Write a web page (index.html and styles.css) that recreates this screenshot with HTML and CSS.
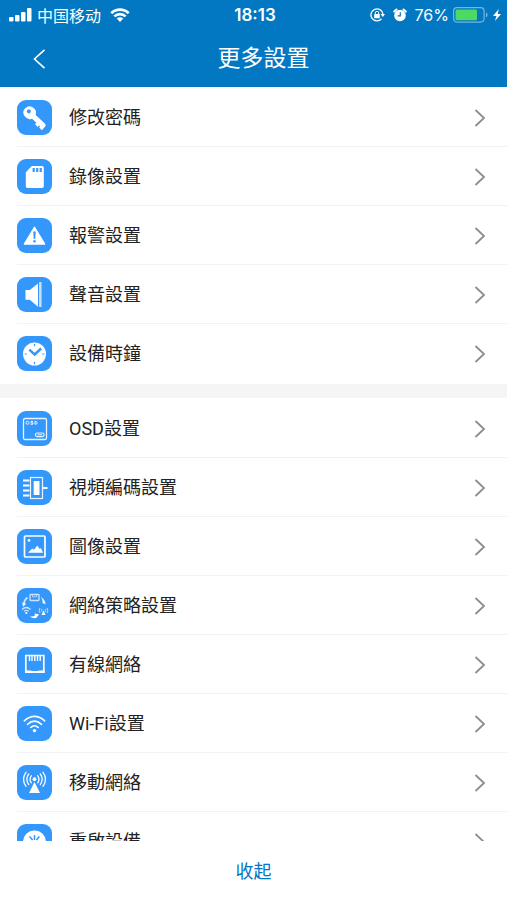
FILE: index.html
```html
<!DOCTYPE html>
<html lang="zh-Hant">
<head>
<meta charset="utf-8">
<meta name="viewport" content="width=device-width, initial-scale=1">
<title>更多設置</title>
<link rel="stylesheet" href="styles.css">
</head>
<body>
<svg class="sprite" aria-hidden="true">
  <symbol id="chevron" viewBox="0 0 12 18"><path d="M1.5 1 10 9 1.5 17" fill="none" stroke="currentColor" stroke-width="1.8"/></symbol>
</svg>
<header class="header">
  <div class="status">
    <div class="status-left">
      <svg width="23" height="14" viewBox="0 0 23 14" fill="#fff"><rect x="0" y="9" width="4.500" height="4.500" rx="1"/><rect x="6" y="7" width="4.500" height="6.500" rx="1"/><rect x="12" y="4" width="4.500" height="9.500" rx="1"/><rect x="18" y="0" width="4.500" height="13.500" rx="1"/></svg>
      <span class="carrier" lang="zh-Hans">中国移动</span>
      <svg class="wifi" width="20" height="14" viewBox="0 0 20 14"><g fill="none" stroke="#fff" stroke-width="2.700"><path d="M1.300 5.200a12.300 12.300 0 0 1 17.400 0"/><path d="M4.400 8.400a8 8 0 0 1 11.200 0"/></g><path d="M6.700 10.600a4.700 4.700 0 0 1 6.600 0L10 14z" fill="#fff"/></svg>
    </div>
    <time class="time">18:13</time>
    <div class="status-right">
      <svg width="15" height="14" viewBox="0 0 15 14"><path d="M11.500 10.800A6 6 0 1 1 12.900 6" fill="none" stroke="#fff" stroke-width="1.300"/><path d="M10.500 6H15l-2.200 3z" fill="#fff"/><rect x="4.200" y="6" width="5.600" height="4.300" rx=".6" fill="#fff"/><path d="M5.300 6V5a1.700 1.700 0 0 1 3.400 0v1" fill="none" stroke="#fff"/></svg>
      <svg class="alarm" width="14" height="14" viewBox="0 0 14 14"><circle cx="7" cy="7.500" r="5.800" fill="#fff"/><path d="M1.200 3.600 3.500 1.500M12.800 3.600l-2.300-2.100" stroke="#fff" stroke-width="2" stroke-linecap="round"/><path d="M7.300 4.200v3.600H4.600" fill="none" stroke="#0277c2" stroke-width="1.200"/></svg>
      <span class="percent">76%</span>
      <svg width="36" height="16" viewBox="0 0 36 16"><rect x=".6" y=".6" width="30.500" height="14.500" rx="3.500" fill="none" stroke="#76b6df" stroke-width="1.200"/><rect x="2.500" y="2.500" width="21.500" height="10.800" rx="1.500" fill="#4cd964"/><path d="M33 5.500c2 .5 2 4.300 0 4.800z" fill="#76b6df"/></svg>
      <svg class="bolt" width="8" height="12" viewBox="0 0 8 12"><path d="M5.800 0 0 7h3.400L2 12l6-7H4.700z" fill="#fff"/></svg>
    </div>
  </div>
  <div class="nav">
    <button class="back" type="button" aria-label="返回"><svg width="13" height="20" viewBox="0 0 13 20"><path d="M11.500.8 1.500 10l10 9.200" fill="none" stroke="#fff" stroke-width="1.600"/></svg></button>
    <h1 class="title">更多設置</h1>
  </div>
</header>
<main class="content">
  <ul class="group">
    <li><a class="row" href="#password"><svg class="icon" viewBox="0 0 35 35"><g transform="translate(13 12.800) rotate(43)"><path fill-rule="evenodd" d="M-6.500 0A6.300 6 0 0 1 5.600-2.300H18.500Q20.500-2 20.500 0V4.600H16.800V3.200H15.300V5H11.500V2.900H5.500A6.300 6 0 0 1-6.500 0zM-3.900-.3a2 2 0 1 0 4 0 2 2 0 1 0-4 0z" fill="#fff"/></g></svg><span class="label">修改密碼</span><svg class="arrow"><use href="#chevron"/></svg></a></li>
    <li><a class="row" href="#record"><svg class="icon" viewBox="0 0 35 35"><path d="M14.800 7H25a1.800 1.800 0 0 1 1.800 1.800v18.400A1.800 1.800 0 0 1 25 29H10.600a1.800 1.800 0 0 1-1.800-1.800V13.300z" fill="#fff"/><path d="M16.700 9v4M20.200 9v4M23.700 9v4" stroke="#3397fb" stroke-width="2.200"/></svg><span class="label">錄像設置</span><svg class="arrow"><use href="#chevron"/></svg></a></li>
    <li><a class="row" href="#alarm"><svg class="icon" viewBox="0 0 35 35"><path d="M17.500 8.800 28 26.200H7z" fill="#fff" stroke="#fff" stroke-linejoin="round"/><path d="M16.200 13.500h2.600l-.6 7.500h-1.400z" fill="#3397fb"/><circle cx="17.500" cy="23.300" r="1.200" fill="#3397fb"/></svg><span class="label">報警設置</span><svg class="arrow"><use href="#chevron"/></svg></a></li>
    <li><a class="row" href="#sound"><svg class="icon" viewBox="0 0 35 35"><path d="M8.500 13h4.300L21 6.500v23.200l-8.200-6.900H8.500z" fill="#fff"/><path d="M23.300 5v25" stroke="#c8e1ff" stroke-width="2.500"/></svg><span class="label">聲音設置</span><svg class="arrow"><use href="#chevron"/></svg></a></li>
    <li><a class="row" href="#clock"><svg class="icon" viewBox="0 0 35 35"><circle cx="17.500" cy="18" r="11.500" fill="#fff"/><path d="M17.500 8v2.200M17.500 26v2.200M7.700 18h2.100M25.200 18h2.100" stroke="#3397fb" stroke-width="1.200"/><path d="m12.300 13.600 5.400 4.900 6.400-6" fill="none" stroke="#3397fb" stroke-width="2.400"/></svg><span class="label">設備時鐘</span><svg class="arrow"><use href="#chevron"/></svg></a></li>
  </ul>
  <ul class="group">
    <li><a class="row" href="#osd"><svg class="icon" viewBox="0 0 35 35"><g fill="none" stroke="#e9f4ff"><rect x="6.500" y="7.500" width="23" height="21" rx="1.500" stroke-width="1.300"/><rect x="18.500" y="22" width="8.500" height="3.600" rx="1.500" stroke-width="1.200"/><path d="M20.500 23.800h4.500" stroke-width="1"/><rect x="9" y="10.300" width="3" height="2.900" rx="1.200" stroke-width="1"/><path d="M16 10.400h-2v1.400h2v1.400h-2.600M18 10.400v2.800h1.300q1.800-1.400 0-2.800z" stroke-width="1"/></g></svg><span class="label">OSD設置</span><svg class="arrow"><use href="#chevron"/></svg></a></li>
    <li><a class="row" href="#encode"><svg class="icon" viewBox="0 0 35 35"><rect x="13.500" y="7.500" width="12" height="21" fill="none" stroke="#e9f4ff" stroke-width="1.200"/><rect x="16.700" y="11" width="5.800" height="14" fill="#fff"/><path d="M6 10.500h6.500M6 15.500h6.500M6 20.500h6.500M6 25.500h6.500M26 18h4.500" stroke="#fff" stroke-width="1.900"/></svg><span class="label">視頻編碼設置</span><svg class="arrow"><use href="#chevron"/></svg></a></li>
    <li><a class="row" href="#image"><svg class="icon" viewBox="0 0 35 35"><rect x="7.500" y="7" width="20.500" height="21" rx="1" fill="none" stroke="#fff" stroke-width="1.700"/><path d="M11 23.700l4.200-4.200 1.800 1.300 3.300-4.300 2.200 3.200 1.500-.4 2 4.400z" fill="#fff"/><circle cx="12" cy="11.400" r="1.300" fill="#fff"/></svg><span class="label">圖像設置</span><svg class="arrow"><use href="#chevron"/></svg></a></li>
    <li><a class="row" href="#policy"><svg class="icon" viewBox="0 0 35 35"><g fill="none" stroke="#cde4ff"><rect x="13" y="6.500" width="9" height="6" rx=".7" stroke-width="1.300"/><path d="M15.500 7v1.800h4V7" stroke-width=".8"/><path d="M10.500 9.500Q7 12 7 16.500" stroke-width="1.800"/><path d="M5 21.500q4.300-4 8.600 0M7 23.400q2.300-2 4.600 0" stroke-width="1.200"/><path d="M23 20q-1.500 2.500 0 5M30 20q1.500 2.500 0 5M25 21q-.8 1.500 0 3M28 21q.8 1.500 0 3" stroke-width=".9"/></g><g fill="#fff"><circle cx="9.300" cy="25" r="1.100"/><path d="M26.500 22.500l2 4.500h-4z"/><path d="M5 14.500l4.200 1.200-3 3z"/><path d="M24 9q4 2.500 4.600 7.300l-3-1.300Q26 12 24 9z"/><path d="M12.500 28.300q3 .8 5.500-.8l-.5-2 4.700.8-3 3.700q-3.500.7-6.700-1.700z"/></g></svg><span class="label">網絡策略設置</span><svg class="arrow"><use href="#chevron"/></svg></a></li>
    <li><a class="row" href="#wired"><svg class="icon" viewBox="0 0 35 35"><path d="M8.800 8.500h18v16.300H8.800z" fill="none" stroke="#fff" stroke-width="1.700"/><path d="M8 23.500h6l1.500 1.800h4.600l1.500-1.800h6v2.500H8z" fill="#fff"/><path d="M12.500 9v5M15 9v5M17.800 9v5M20.500 9v5M23.200 9v5" stroke="#fff" stroke-width="1.400"/></svg><span class="label">有線網絡</span><svg class="arrow"><use href="#chevron"/></svg></a></li>
    <li><a class="row" href="#wifi"><svg class="icon" viewBox="0 0 35 35"><g fill="none" stroke="#fff" stroke-width="1.600" stroke-linecap="round"><path d="M7.300 14.800q10.200-8.800 20.400 0"/><path d="M10.500 18.300q7-6.200 14 0"/><path d="M13.700 21.500q3.800-3.500 7.600 0"/></g><circle cx="17.500" cy="24.600" r="1.700" fill="#fff"/></svg><span class="label">Wi-Fi設置</span><svg class="arrow"><use href="#chevron"/></svg></a></li>
    <li><a class="row" href="#mobile"><svg class="icon" viewBox="0 0 35 35"><path d="M17.500 17 23 28H12z" fill="#fff"/><circle cx="17.500" cy="14.200" r="1.900" fill="#fff"/><g fill="none" stroke="#fff" stroke-width="1.300" stroke-linecap="round"><path d="M14.300 10.800q-2.600 3.500 0 7M20.700 10.800q2.600 3.500 0 7M11.700 9q-3.800 5.200 0 10.500M23.300 9q3.800 5.200 0 10.500M9 7.300q-5 7 0 14M26 7.300q5 7 0 14"/></g></svg><span class="label">移動網絡</span><svg class="arrow"><use href="#chevron"/></svg></a></li>
    <li><a class="row" href="#restart"><svg class="icon" viewBox="0 0 35 35"><circle cx="17.500" cy="18" r="11.500" fill="#fff"/><path d="M17.500 11v5M12.600 12.500l3 3.600M22.400 12.500l-3 3.600" stroke="#3397fb" stroke-width="1.500"/></svg><span class="label">重啟設備</span><svg class="arrow"><use href="#chevron"/></svg></a></li>
  </ul>
</main>
<footer class="footer"><button class="collapse" type="button">收起</button></footer>
</body>
</html>
```
FILE: styles.css
```css
* { box-sizing: border-box; }

body {
  margin: 0;
  height: 100vh;
  display: flex;
  flex-direction: column;
  background: #fff;
  color: #222;
  font-family: Roboto, "Noto Sans CJK TC", sans-serif;
  font-size: 18px;
}

svg { display: block; flex: none; }
button { border: 0; background: none; padding: 0; font: inherit; color: inherit; }
.sprite { position: absolute; width: 0; height: 0; }

.header { flex: none; background: #0277c2; color: #fff; }

.status {
  display: grid;
  grid-template-columns: 1fr auto 1fr;
  align-items: center;
  height: 30px;
  padding: 0 6px 0 9px;
  font-family: Inter, sans-serif;
  font-size: 16px;
  line-height: 24px;
}
.status-left, .status-right { display: flex; align-items: center; }
.status-left { gap: 5px; }
.status-right { justify-content: flex-end; gap: 4px; }
.carrier { font-family: "Noto Sans CJK SC", sans-serif; }
.wifi { margin-left: 4px; }
.time { font-size: 17px; font-weight: 600; }
.alarm { margin: 0 4px; }

.nav {
  display: grid;
  grid-template-columns: 80px 1fr 60px;
  align-items: center;
  height: 57px;
}
.back { height: 44px; padding-left: 33px; }
.title {
  margin: 0;
  font-size: 23px;
  font-weight: 400;
  line-height: 32px;
  text-align: center;
}

.content { flex: 1; min-height: 0; overflow: hidden; }

.group { margin: 0; padding: 1px 0; list-style: none; }
.group + .group { border-top: 14px solid #f5f5f5; }

.row {
  display: flex;
  align-items: center;
  height: 59px;
  margin-left: 17px;
  padding-right: 21px;
  color: inherit;
  text-decoration: none;
}
li + li .row { box-shadow: 0 -1px #f1f2f3; }
.icon { width: 35px; height: 35px; border-radius: 9px; background: #3397fb; }
.label { flex: 1; margin-left: 17px; line-height: 26px; }
.arrow { width: 12px; height: 18px; color: #8d8d8d; }

.footer { flex: none; height: 59px; padding-bottom: 2px; display: flex; justify-content: center; }
.collapse { padding: 0 24px; color: #0277c2; }
```
